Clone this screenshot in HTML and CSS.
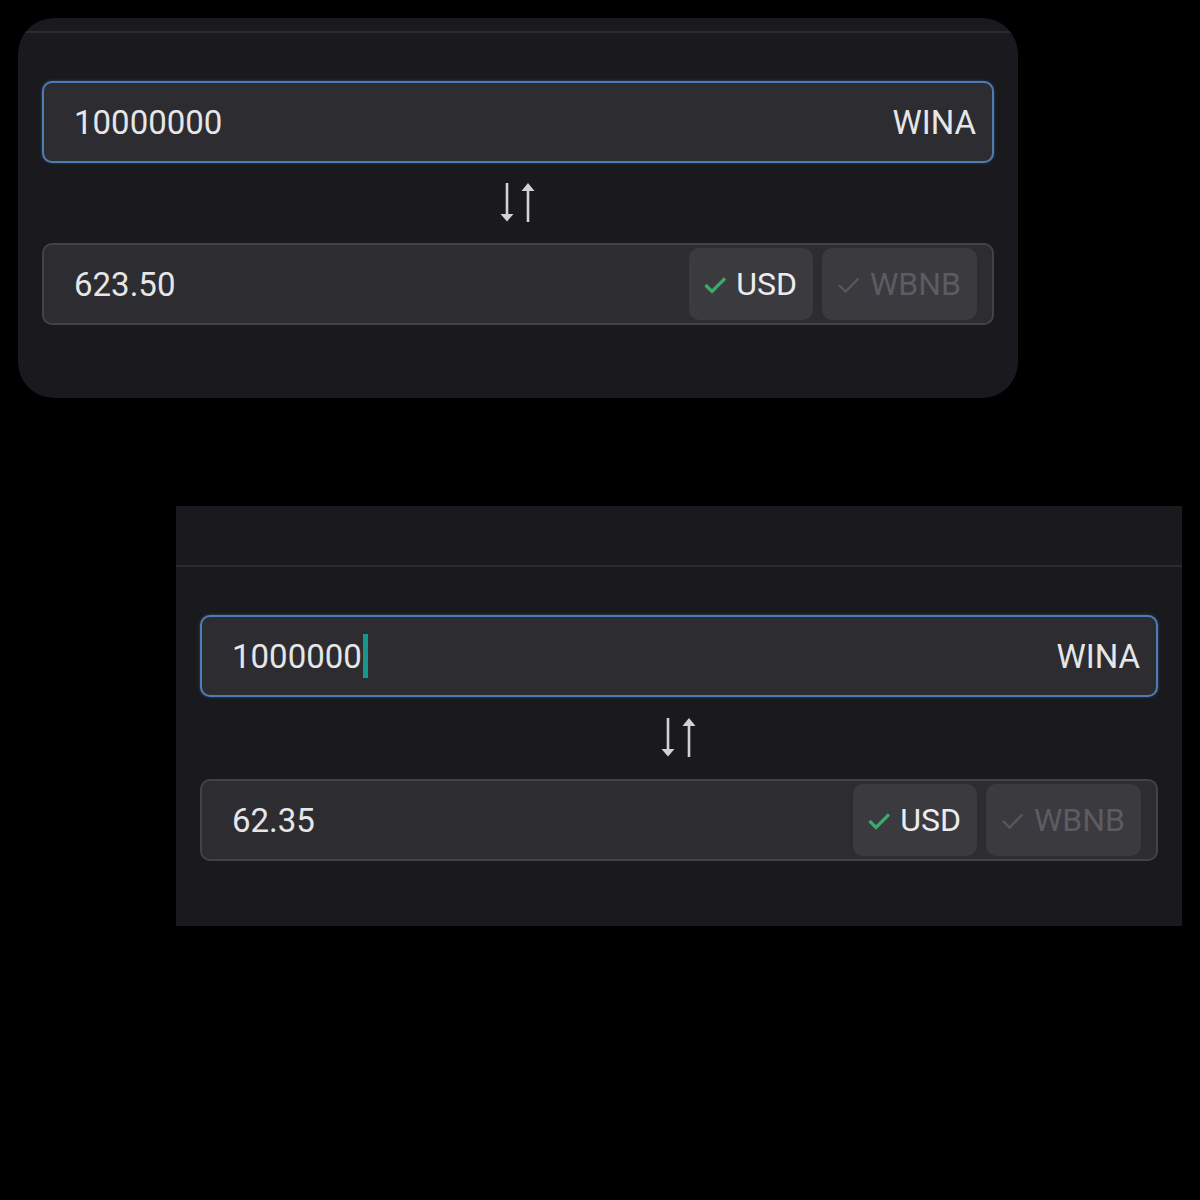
FILE: index.html
```html
<!DOCTYPE html>
<html lang="en">
<head>
    <meta charset="UTF-8">
    <meta name="viewport" content="width=device-width, initial-scale=1.0">
    <title>Convert</title>
    <link rel="stylesheet" href="styles.css">
</head>
<body>
    <!-- converter, first state -->
    <div class="panel panel-rounded">
        <div class="panel-head"></div>
        <div class="panel-body">
            <div class="field field-active">
                <span class="field-value">10000000</span>
                <span class="field-unit">WINA</span>
            </div>
            <div class="swap">
                <svg width="40" height="42" viewBox="0 0 40 42">
                    <line x1="9" y1="1" x2="9" y2="34" stroke="#d2d2d4" stroke-width="2.6"/>
                    <polygon points="2.5,32 15.5,32 9,39.5" fill="#d2d2d4"/>
                    <line x1="30" y1="8" x2="30" y2="40" stroke="#d2d2d4" stroke-width="2.6"/>
                    <polygon points="23.5,9 36.5,9 30,1" fill="#d2d2d4"/>
                </svg>
            </div>
            <div class="field">
                <span class="field-value">623.50</span>
                <div class="units">
                    <button class="unit unit-on">
                        <svg width="22" height="18" viewBox="0 0 22 18"><path d="M1.5 9 L8 15.5 L21 2.5" fill="none" stroke="#3fa86d" stroke-width="3.2"/></svg>
                        USD
                    </button>
                    <button class="unit">
                        <svg width="23" height="18" viewBox="0 0 22 18"><path d="M1.5 9 L8 15.5 L21 2.5" fill="none" stroke="#57575c" stroke-width="2.4"/></svg>
                        WBNB
                    </button>
                </div>
            </div>
        </div>
    </div>

    <!-- converter, second state -->
    <div class="panel panel-wide">
        <div class="panel-head panel-head-tall"></div>
        <div class="panel-body">
            <div class="field field-active">
                <span class="field-value">1000000<span class="caret"></span></span>
                <span class="field-unit">WINA</span>
            </div>
            <div class="swap swap-tall">
                <svg width="40" height="42" viewBox="0 0 40 42">
                    <line x1="9" y1="1" x2="9" y2="34" stroke="#d2d2d4" stroke-width="2.6"/>
                    <polygon points="2.5,32 15.5,32 9,39.5" fill="#d2d2d4"/>
                    <line x1="30" y1="8" x2="30" y2="40" stroke="#d2d2d4" stroke-width="2.6"/>
                    <polygon points="23.5,9 36.5,9 30,1" fill="#d2d2d4"/>
                </svg>
            </div>
            <div class="field">
                <span class="field-value">62.35</span>
                <div class="units">
                    <button class="unit unit-on">
                        <svg width="22" height="18" viewBox="0 0 22 18"><path d="M1.5 9 L8 15.5 L21 2.5" fill="none" stroke="#3fa86d" stroke-width="3.2"/></svg>
                        USD
                    </button>
                    <button class="unit">
                        <svg width="23" height="18" viewBox="0 0 22 18"><path d="M1.5 9 L8 15.5 L21 2.5" fill="none" stroke="#57575c" stroke-width="2.4"/></svg>
                        WBNB
                    </button>
                </div>
            </div>
        </div>
    </div>
</body>
</html>
```

FILE: styles.css
```css
body {
    margin: 0;
    padding-top: 18px;
    background-color: #000;
    font-family: Roboto, "Liberation Sans", sans-serif;
    color: #e6e6e8;
}
.panel {
    background-color: #1a1a1e;
    overflow: hidden;
    box-sizing: border-box;
}
.panel-rounded {
    width: 1000px;
    height: 380px;
    margin-left: 18px;
    border-radius: 36px;
}
.panel-wide {
    width: 1006px;
    height: 420px;
    margin-left: 176px;
    margin-top: 108px;
}
.panel-head {
    height: 13px;
    border-bottom: 2px solid #2b2b30;
}
.panel-head-tall {
    height: 59px;
}
.panel-body {
    padding: 48px 24px 0;
}
.field {
    height: 82px;
    box-sizing: border-box;
    background-color: #2c2c31;
    border: 2px solid #424247;
    border-radius: 10px;
    display: flex;
    align-items: center;
    justify-content: space-between;
    padding: 0 15px 0 30px;
}
.field-active {
    border-color: #4d7db3;
    box-shadow: 0 0 3px rgba(77, 125, 179, 0.5);
    padding-right: 16px;
}
.field-value {
    font-size: 33px;
    display: flex;
    align-items: center;
}
.field-unit {
    font-size: 33px;
}
.caret {
    width: 5px;
    height: 44px;
    background-color: #17968a;
    margin-left: 1px;
}
.swap {
    height: 80px;
    display: flex;
    align-items: center;
    justify-content: center;
}
.swap-tall {
    height: 82px;
}
.units {
    display: flex;
    gap: 9px;
    align-self: stretch;
    padding: 3px 0;
}
.unit {
    font-family: Roboto, "Liberation Sans", sans-serif;
    font-size: 32px;
    color: #5c5c61;
    background-color: #3a3a3f;
    border: none;
    border-radius: 10px;
    padding: 0 16px 0 15px;
    display: flex;
    align-items: center;
    gap: 10px;
    cursor: pointer;
}
.unit svg {
    margin-top: 1px;
}
.unit-on {
    color: #ececee;
}
```
